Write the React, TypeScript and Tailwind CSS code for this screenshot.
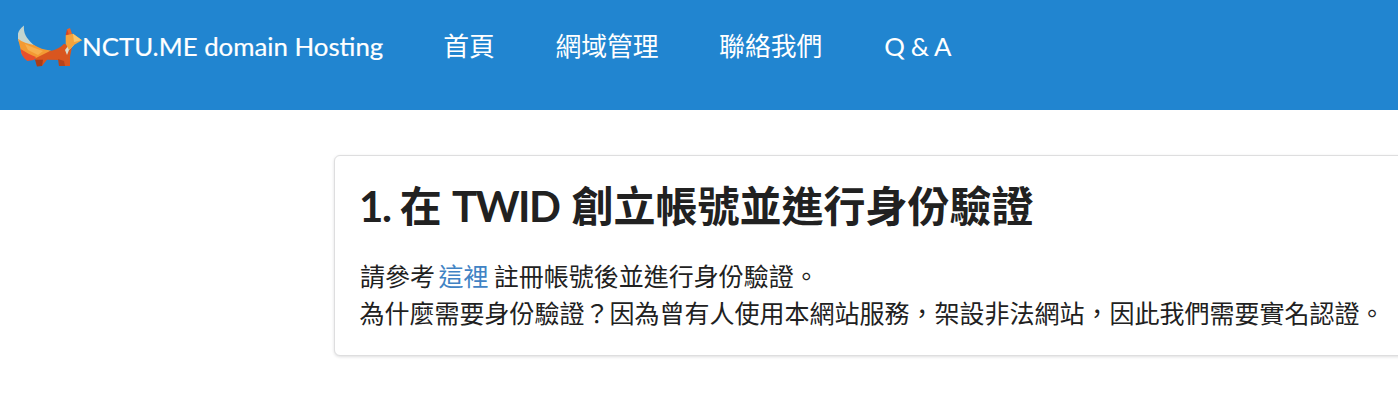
const font = "font-['Lato','Noto_Sans_CJK_TC',sans-serif]";

// traced from the logo, coordinates are page pixels minus (18, 25)
function FoxLogo() {
  return (
    <svg viewBox="0 0 66 44" className="w-[66px] h-[44px] shrink-0 -mr-[2px]">
      {/* tail */}
      <path d="M6 0.5 C0 5 -1 10 0 14 L1 17 L9.5 20 L17 21 C10 15 5 10 6 0.5Z" fill="#c4d5cf" />
      <path d="M0 13.7 C4 17 10 19 16 20 C21 23 26 25 33 25.5 L25 32 L16 34 L4 30 Z" fill="#f39a33" />
      <path d="M7 19 C12 21 18 24 25 26 L20 30 L10 25Z" fill="#f7b04e" />
      <path d="M2.5 24 C8 27 12 30 18 32 L16 35 L9.3 36 C5 33 3 29 2.5 24Z" fill="#e8502d" />
      {/* body */}
      <path d="M16 34 L32 26 C38 25 43 22 46 18.7 L54 22 L52 32 L52 41 L46 41 L41 35 L29 34.7 L24 41 L19 41 L17.7 34.7Z" fill="#d9561f" />
      <path d="M17 34.7 L25 34.7 L24 41 L19 41.5Z" fill="#a93c18" />
      <path d="M40 34 L46 36 L47 41 L41 41Z" fill="#b8431a" />
      {/* chest */}
      <path d="M56 20 L51 25 L49 30 L47 25 L50 21Z" fill="#d6dcd0" />
      {/* head */}
      <path d="M47.7 10.3 L49 4.3 L52 8 L50 12Z" fill="#d9451f" />
      <path d="M49 4.3 L52 3 L54 8.7 L51 10Z" fill="#e8632a" />
      <path d="M47.7 10.3 L55 8.7 L64 15.3 L56 20 L51 25 L47.7 18.7Z" fill="#f4a33c" />
      <path d="M55 8.7 L64 15.3 L56 17Z" fill="#f8c66b" />
    </svg>
  );
}

export default function App() {
  return (
    <div className={`${font} bg-white min-h-[400px] overflow-hidden text-[#212121]`}>
      <header className="h-[110px] bg-[#2185d0] text-white flex items-start pt-[24px] pl-[18px]">
        <a className="flex items-center h-[44px] text-[25.8px] mr-[60px] whitespace-nowrap [-webkit-text-stroke:0.2px_white]">
          <span className="mt-[2px]">
            <FoxLogo />
          </span>
          NCTU.ME domain Hosting
        </a>
        <nav className="flex items-center h-[44px] gap-[60.5px] text-[25.8px] whitespace-nowrap">
          <a>首頁</a>
          <a>網域管理</a>
          <a>聯絡我們</a>
          <a className="ml-[1.5px] tracking-[-0.4px]">Q &amp; A</a>
        </nav>
      </header>
      <main className="pt-[45px] pl-[334px]">
        <section className="w-[1100px] h-[201px] bg-white border border-[#dededf] rounded-[6px] shadow-[0_1px_3px_rgba(34,36,38,0.15)] pt-[22px] pl-[25px]">
          <h1 className="text-[42px] leading-[56px] font-bold whitespace-nowrap -ml-[1px]">
            <span className="tracking-[-1.3px]">1. </span>在{' '}
            <span className="tracking-[-1.6px] mr-[2px]">TWID</span> 創立帳號並進行身份驗證
          </h1>
          <p className="mt-[24px] text-[25px] leading-[37px] whitespace-nowrap">
            請參考 <a className="text-[#4183c4] -ml-[3px] -mr-[1px]">這裡</a> 註冊帳號後並進行身份驗證。
            <br />
            <span className="-ml-[0.5px]">為什麼需要身份驗證？因為曾有人使用本網站服務，架設非法網站，因此我們需要實名認證。</span>
          </p>
        </section>
      </main>
    </div>
  );
}
